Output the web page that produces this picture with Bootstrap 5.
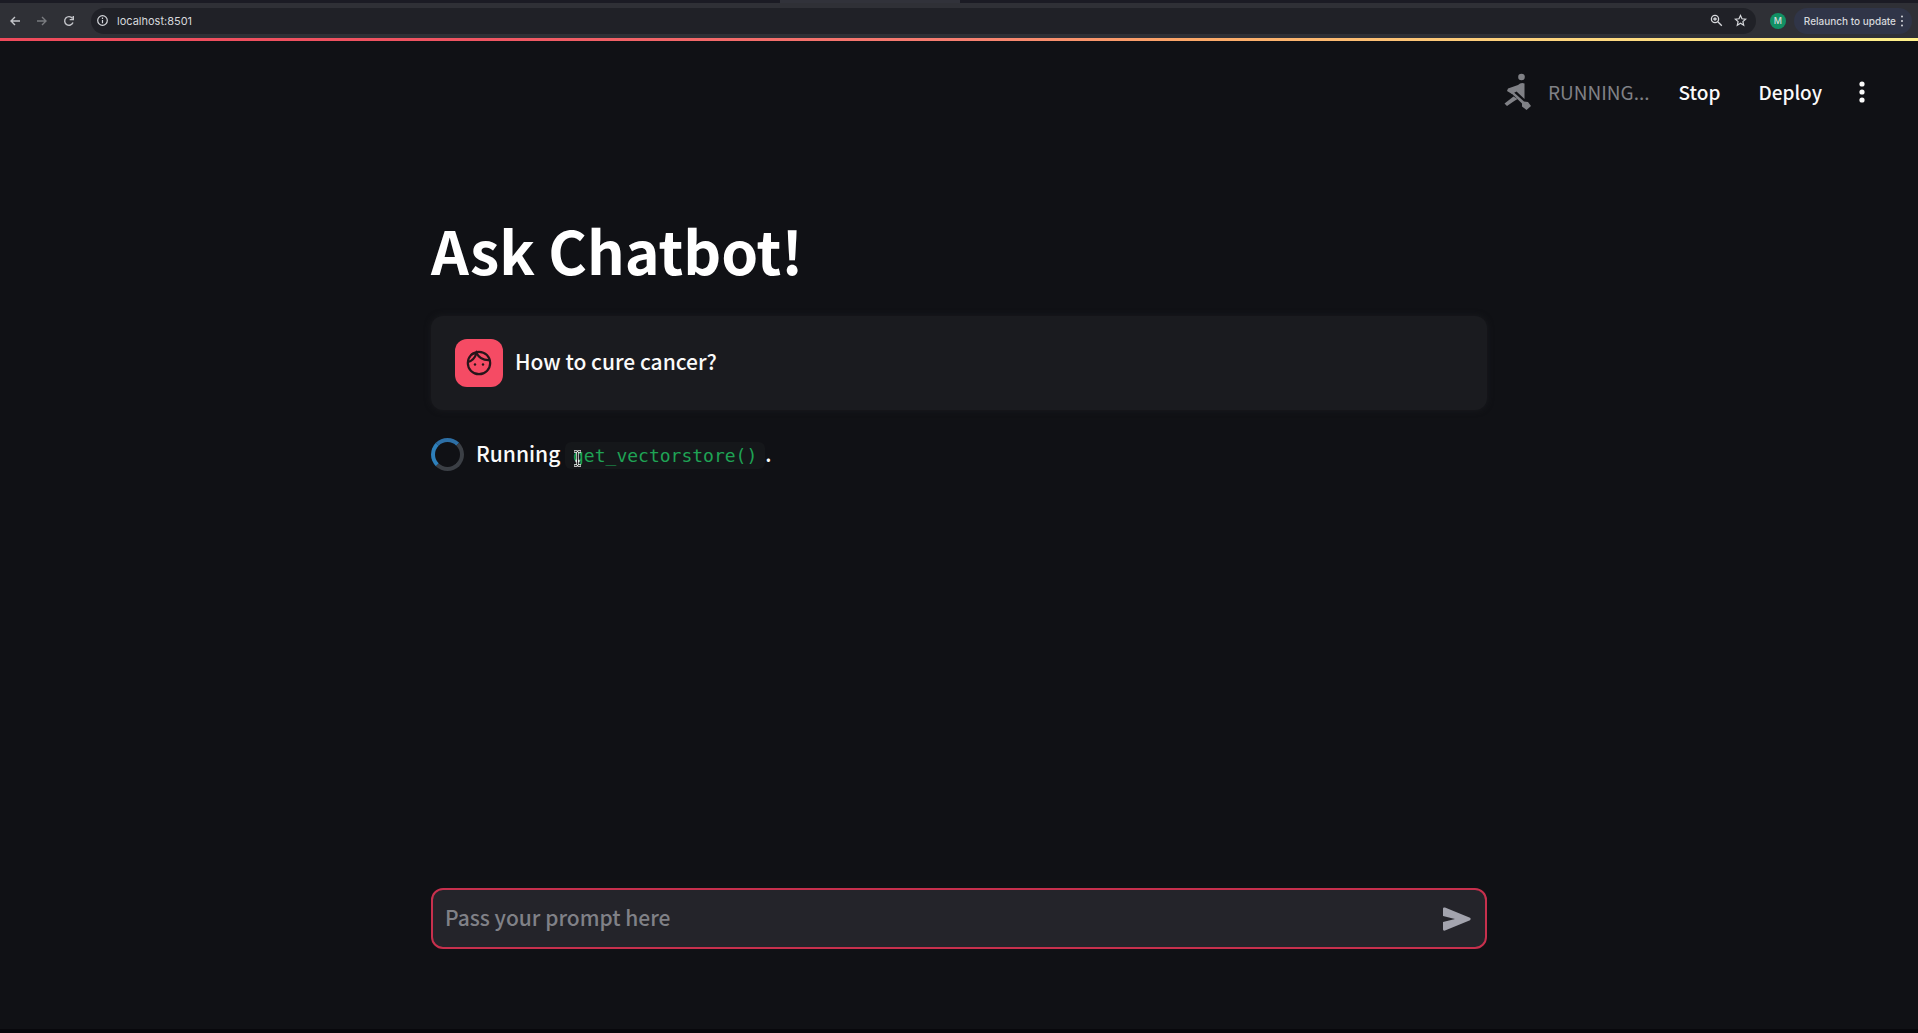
<!DOCTYPE html>
<html lang="en" data-bs-theme="dark">
<head>
<meta charset="utf-8">
<meta name="viewport" content="width=device-width, initial-scale=1">
<title>Ask Chatbot!</title>
<link href="https://cdn.jsdelivr.net/npm/bootstrap@5.3.0/dist/css/bootstrap.min.css" rel="stylesheet">
<style>
  body { background: #101115; color: #fafafa; font-family: "Noto Sans CJK JP", "Noto Sans", sans-serif; font-size: 21px; font-weight: 500; line-height: 36px; border-bottom: 4px solid #08080c; }
  svg { display: block; flex: none; }
  .tab-strip { height: 3px; background: #1b1b24; padding-right: 178px; }
  .tab-strip span { width: 180px; height: 3px; background: #31323a; }
  .toolbar { height: 35px; background: #2f3036; font-family: Inter, "Liberation Sans", sans-serif; font-size: 11px; line-height: 16px; color: #d6d8dc; padding: 0 6px; }
  button { font-weight: inherit; }
  .toolbar button, .app-header button, .send-btn { background: none; border: 0; padding: 0; color: inherit; }
  .nav-buttons { gap: 15px; padding: 0 16px 0 3px; color: #c4c5ca; }
  .address { height: 26px; border-radius: 13px; background: #202127; padding: 0 5px 0 5px; }
  .address input { background: none; border: 0; outline: 0; padding: 0; color: inherit; min-width: 0; }
  .star-icon { margin: 0 4px 0 11px; }
  .toolbar .profile { width: 16px; height: 16px; border-radius: 8px; background: #129064; font-size: 9px; margin: 0 8px 0 14px; }
  .toolbar .relaunch { height: 26px; border-radius: 13px; background: #303548; padding: 0 8px 0 10px; font-size: 10px; }
  .rainbow { height: 3px; background: linear-gradient(90deg, #ef4a5b 0, #ef5562 25%, #f77f71 50%, #fba768 62%, #fdd07c 78%, #fff28b 100%); }
  .app-header { padding: 32px 48px 0 0; font-size: 19px; }
  .status { color: #808186; font-weight: 400; }
  .stop-btn { margin-left: 29px; }
  .deploy-btn { margin-left: 38px; }
  .menu-btn { margin-left: 32px; }
  .content { width: 100%; max-width: 1056px; }
  h1 { font-size: 59px; font-weight: 700; line-height: 72px; margin: 103px 0 30px; }
  .message { background: #1a1b1f; border-radius: 12px; padding: 23px 24px; gap: 12px; box-shadow: 0 0 6px #1a1b1f; }
  .message p { margin: 0; padding-bottom: 4px; }
  .avatar { width: 48px; height: 48px; border-radius: 12px; background: #f54b64; color: #26151a; }
  .running { margin-top: 25px; gap: 12px; }
  .running p { margin: 0; }
  code { font-family: "DejaVu Sans Mono", monospace; font-size: 18px; font-weight: 400; color: #1fa355; background: #15171a; border-radius: 6px; padding: 3px 8px; }
  .ring { width: 33px; height: 33px; border-radius: 50%; border: 4px solid #3b3f45; border-top-color: #2d6fa5; border-left-color: #2d7fba; }
  .text-cursor { position: absolute; left: 8px; top: 8px; }
  .prompt { background: #24242a; border: 2px solid #c7304d; border-radius: 12px; padding: 0 14px 0 12px; height: 61px; margin-bottom: 80px; }
  .prompt input { background: none; border: 0; outline: 0; padding: 0 0 3px; color: #fafafa; min-width: 0; font-weight: 500; }
  .prompt input::placeholder { color: #808187; opacity: 1; }
  .send-btn { color: #a3a4ae; }
</style>
<script src="https://cdn.jsdelivr.net/npm/bootstrap@5.3.0/dist/js/bootstrap.bundle.min.js"></script>
</head>
<body class="d-flex flex-column min-vh-100">
  <div class="tab-strip d-flex justify-content-center"><span></span></div>
  <nav class="toolbar d-flex align-items-center" aria-label="Browser">
    <div class="nav-buttons d-flex align-items-center">
      <button aria-label="Back"><svg width="12" height="12" viewBox="0 0 12 12" fill="none" stroke="currentColor" stroke-width="1.4"><path d="M11 6H2M6 2 2 6l4 4"/></svg></button>
      <button aria-label="Forward" class="opacity-50"><svg width="12" height="12" viewBox="0 0 12 12" fill="none" stroke="currentColor" stroke-width="1.4"><path d="M1 6h9M6 2l4 4-4 4"/></svg></button>
      <button aria-label="Reload"><svg width="12" height="12" viewBox="0 0 12 12" fill="none" stroke="currentColor" stroke-width="1.4"><path d="M10 7.5A4.3 4.3 0 1 1 9.4 3.3M10.3 1v3.6H6.7"/></svg></button>
    </div>
    <div class="address flex-grow-1 d-flex align-items-center">
      <svg width="13" height="13" viewBox="0 0 13 13" fill="none" stroke="currentColor" stroke-width="1.2"><circle cx="6.5" cy="6.5" r="4.8"/><path d="M6.5 6v3.2M6.5 3.6v1.3"/></svg>
      <input class="flex-grow-1 ms-2" type="text" aria-label="Address" value="localhost:8501">
      <svg width="13" height="13" viewBox="0 0 13 13" fill="none" stroke="currentColor" stroke-width="1.3"><circle cx="5" cy="5" r="3.6"/><path d="m7.8 7.8 4 4M3.2 5h3.6M5 3.2v3.6"/></svg>
      <svg class="star-icon" width="13" height="13" viewBox="0 0 13 13" fill="none" stroke="currentColor" stroke-width="1.2"><path d="m6.5 1.5 1.5 3.3 3.6.4-2.7 2.4.8 3.6-3.2-1.9-3.2 1.9.8-3.6L1.4 5.2 5 4.8z"/></svg>
    </div>
    <button class="profile d-flex align-items-center justify-content-center">M</button>
    <button class="relaunch d-flex align-items-center">Relaunch to update
      <svg class="ms-1" width="4" height="12" viewBox="0 0 4 12" fill="currentColor"><circle cx="2" cy="1.5" r="1"/><circle cx="2" cy="6" r="1"/><circle cx="2" cy="10.5" r="1"/></svg></button>
  </nav>
  <div class="rainbow"></div>
  <header class="app-header d-flex justify-content-end align-items-center">
    <svg class="status me-3" width="28" height="38" viewBox="0 0 28 38" fill="currentColor"><circle cx="17.5" cy="4" r="3.3"/><path d="M14 12q3-3 6.500-1.500V26L12.500 18.500 8 21 3 18l1-2.500z"/><path d="m4 17 1.500-1.500L20 28.500l4 .5 3 4-4.500 4-4.500-3.500v-3z"/><path d="m9.500 23.500 4 2.500-4 2.500L3 33l-2.500-2.500z"/></svg>
    <span class="status">RUNNING...</span>
    <button class="stop-btn">Stop</button>
    <button class="deploy-btn">Deploy</button>
    <button class="menu-btn" aria-label="Menu"><svg width="16" height="22" viewBox="0 0 16 22" fill="currentColor"><circle cx="8" cy="3" r="2.6"/><circle cx="8" cy="11" r="2.6"/><circle cx="8" cy="19" r="2.6"/></svg></button>
  </header>
  <main class="content mx-auto flex-grow-1 d-flex flex-column">
    <h1>Ask Chatbot!</h1>
    <section class="message d-flex align-items-center">
      <div class="avatar d-flex align-items-center justify-content-center"><svg width="26" height="26" viewBox="0 0 26 26" fill="none" stroke="currentColor" stroke-width="2.2"><circle cx="13" cy="13" r="11.2"/><path d="M2 12c4-1 7-4 8.5-9C13 8 18 10.5 24 10M5 5c1-1 3-2 5-2"/><circle cx="9" cy="14.5" r="1.2" fill="currentColor" stroke="none"/><circle cx="17" cy="14.5" r="1.2" fill="currentColor" stroke="none"/></svg></div>
      <p>How to cure cancer?</p>
    </section>
    <div class="running d-flex align-items-center" role="status">
      <div class="ring"></div>
      <p>Running <code class="position-relative">get_vectorstore()<svg class="text-cursor" width="9" height="17" viewBox="0 0 9 17" fill="none"><path d="M1 1.500h2.500l1 1 1-1H8M4.500 2.500v12M1 15.500h2.500l1-1 1 1H8M2.500 11h4" stroke="#eee" stroke-width="2.4"/><path d="M1.500 1.500h2l1 1 1-1h2M4.500 2.500v12M1.500 15.500h2l1-1 1 1h2" stroke="#111" stroke-width=".9"/></svg></code>.</p>
    </div>
    <form class="prompt d-flex align-items-center mt-auto">
      <input class="flex-grow-1" type="text" aria-label="Prompt" placeholder="Pass your prompt here">
      <button type="button" class="send-btn" aria-label="Send"><svg width="28" height="24" viewBox="0 0 28 24" fill="currentColor"><path d="M0 1.5Q0 0 2 .5l25 10.3q1.3 1.2 0 2.4L2 23.5Q0 24 0 22.5V15l12-3L0 9z"/></svg></button>
    </form>
  </main>
</body>
</html>
